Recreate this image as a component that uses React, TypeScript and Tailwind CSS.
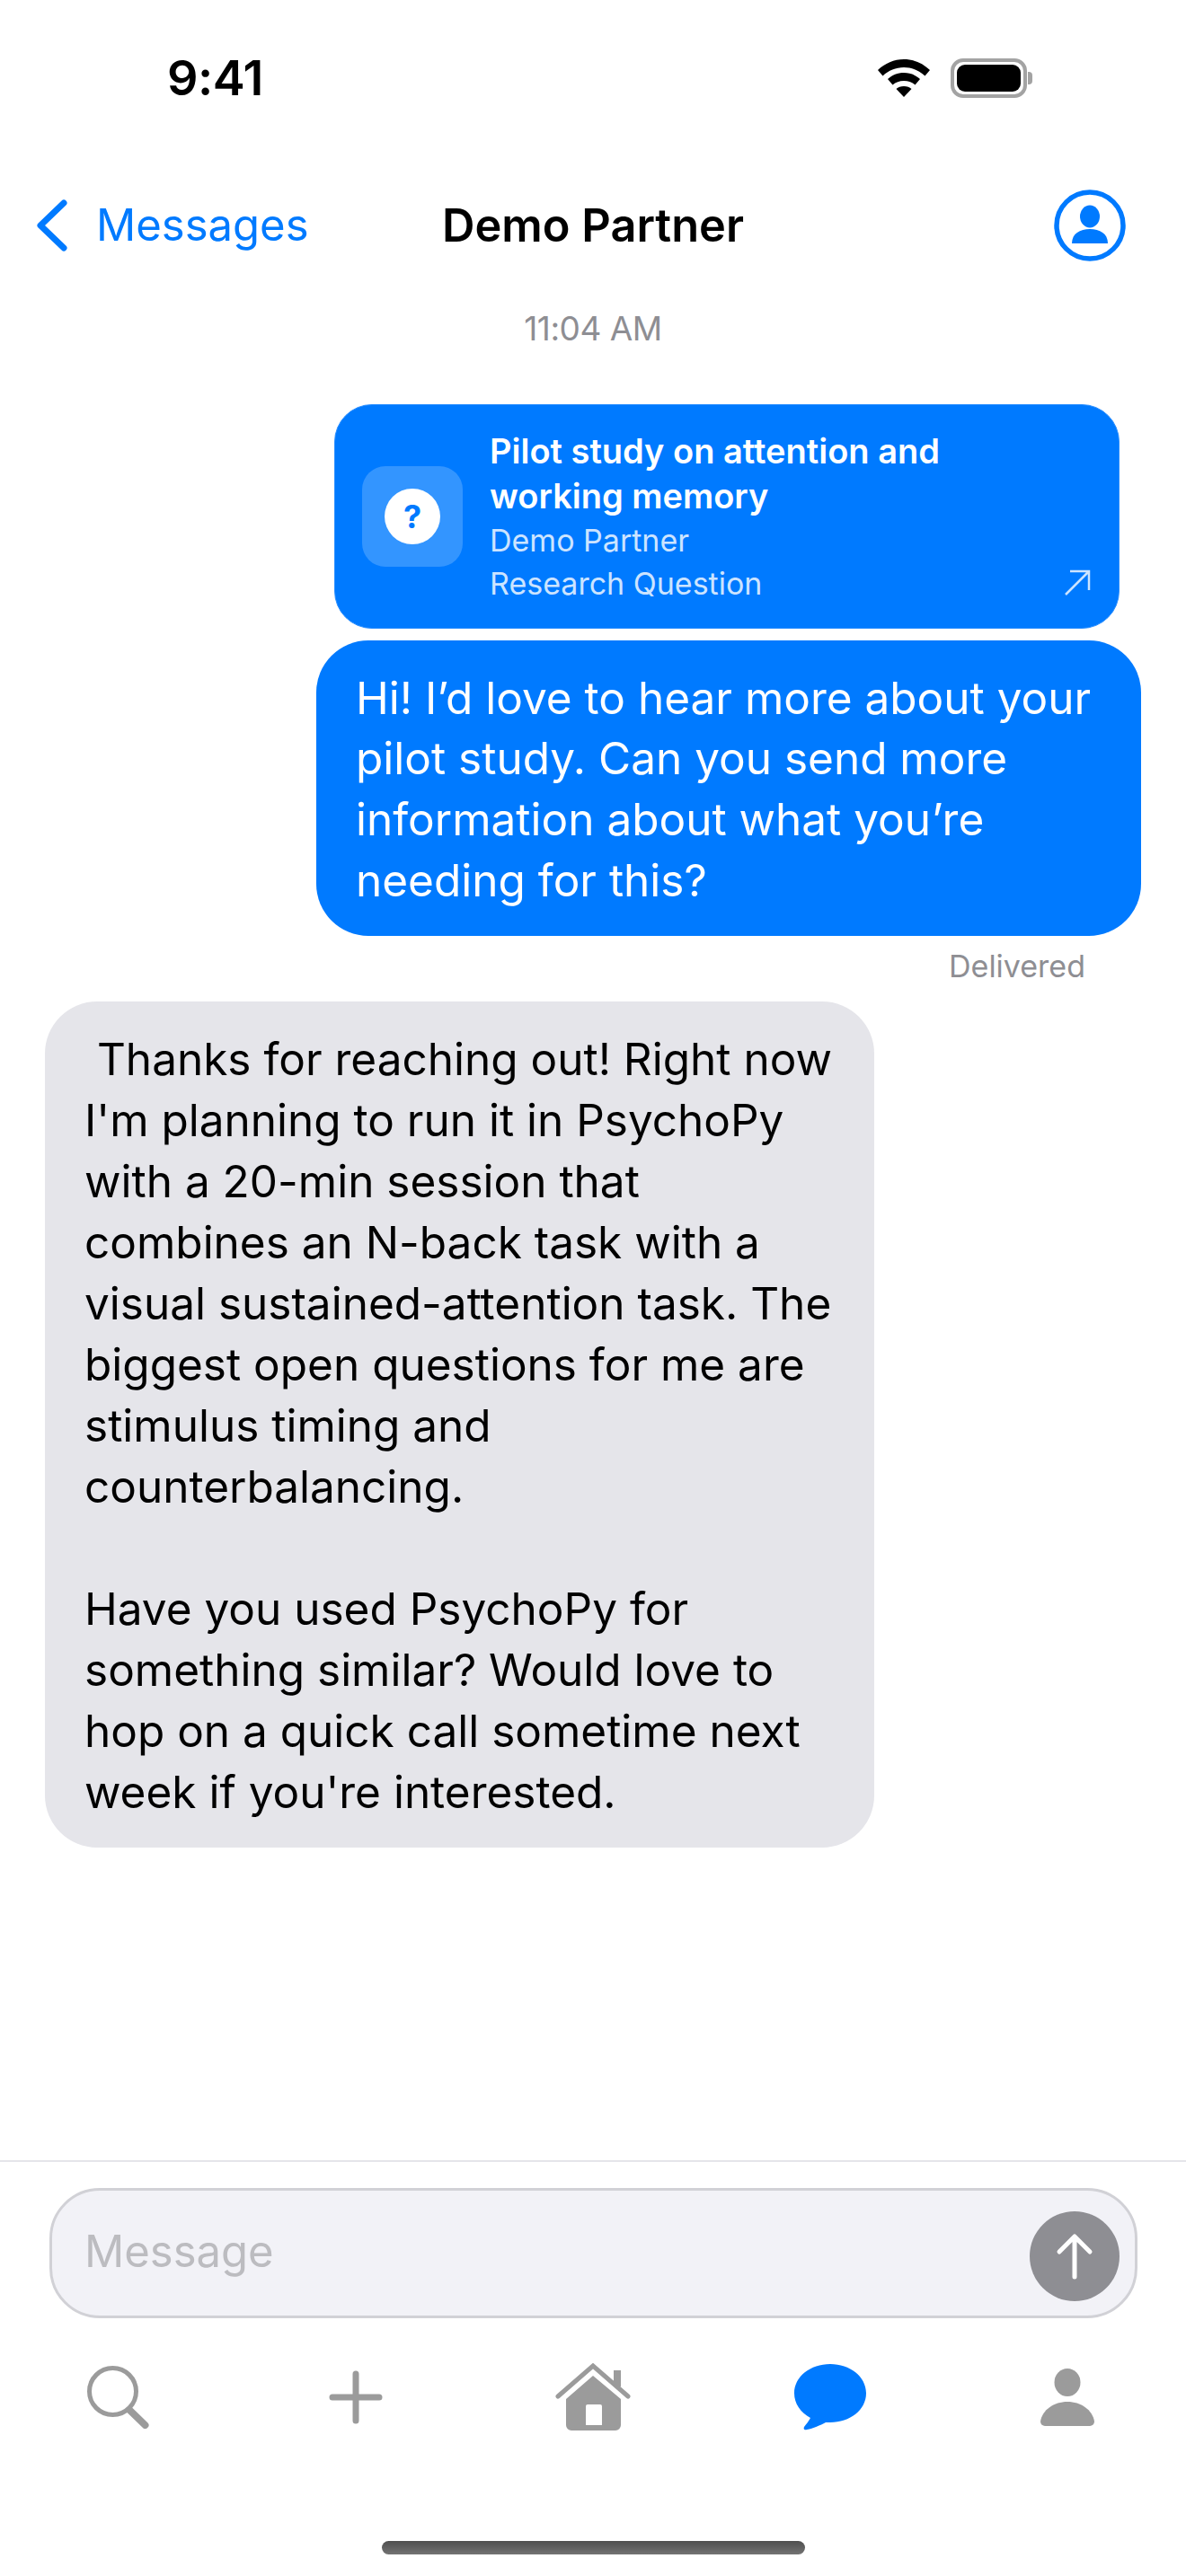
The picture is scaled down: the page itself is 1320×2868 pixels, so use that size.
const BLUE = "#007aff";

function StatusBar() {
  return (
    <div className="flex h-[174px] items-start justify-between pl-[186px] pr-[171px] pt-[54px]">
      <span className="text-[54px] leading-[66px] font-semibold tracking-[-0.5px] text-black">9:41</span>
      <div className="mt-[11px] flex items-center gap-[23px]">
        <svg width="58" height="42" viewBox="0 0 58 42">
          <path d="M29 0C18 0 8 4.500 0 12l5.500 6.500C12 12.500 20 9 29 9s17 3.500 23.500 9.500L58 12C50 4.500 40 0 29 0Z" fill="#000" />
          <path d="M29 15c-7 0-13 2.500-18 7l5.500 6.500C20 25.500 24 24 29 24s9 1.500 12.500 4.500L47 22c-5-4.500-11-7-18-7Z" fill="#000" />
          <path d="M29 30c-3.500 0-6.500 1-8.500 3L29 42l8.500-9c-2-2-5-3-8.500-3Z" fill="#000" />
        </svg>
        <div className="flex items-center gap-[1px]">
          <div className="flex h-[44px] w-[85px] items-center justify-center rounded-[14px] border-[4px] border-[#a3a3a3] bg-white">
            <div className="h-[30px] w-[71px] rounded-[9px] bg-black" />
          </div>
          <div className="h-[14px] w-[5px] rounded-r-[4px] bg-[#a3a3a3]" />
        </div>
      </div>
    </div>
  );
}

function NavBar() {
  return (
    <div className="relative flex h-[152px] items-center justify-between pl-[40px] pr-[67px] pt-[2px]">
      <div className="flex items-center gap-[31px]">
        <svg width="36" height="58" viewBox="0 0 36 58" fill="none">
          <path d="M31 4 5 29l26 25" stroke={BLUE} strokeWidth="7" strokeLinecap="round" strokeLinejoin="round" />
        </svg>
        <span className="text-[49px] leading-[66px] text-[#007aff]">Messages</span>
      </div>
      <span className="absolute left-[492px] top-[44px] text-[50.500px] leading-[66px] font-semibold text-black">Demo Partner</span>
      <svg width="80" height="80" viewBox="0 0 80 80">
        <circle cx="40" cy="40" r="37" fill="none" stroke={BLUE} strokeWidth="5.500" />
        <ellipse cx="40" cy="30" rx="11" ry="12.500" fill={BLUE} />
        <path d="M20 60c0-11 9-16 20-16s20 5 20 16Z" fill={BLUE} />
      </svg>
    </div>
  );
}

function LinkCard() {
  return (
    <div className="relative ml-[372px] flex h-[250px] w-[874px] items-center gap-[30px] rounded-[42px] border border-[#2b8fff] bg-[#007aff] pl-[30px]">
      <div className="flex h-[112px] w-[112px] shrink-0 items-center justify-center rounded-[26px] bg-[#3395ff]">
        <div className="flex h-[62px] w-[62px] items-center justify-center rounded-full bg-white">
          <span className="text-[36px] leading-none font-bold text-[#007aff]">?</span>
        </div>
      </div>
      <div className="flex flex-col">
        <span className="text-[38px] leading-[50px] font-semibold text-white">Pilot study on attention and</span>
        <span className="text-[38px] leading-[50px] font-semibold text-white">working memory</span>
        <span className="mt-[2px] text-[34px] leading-[46px] text-[#cce4ff]">Demo Partner</span>
        <span className="mt-[2px] text-[34px] leading-[46px] text-[#cce4ff]">Research Question</span>
      </div>
      <svg className="absolute right-[30px] bottom-[34px]" width="32" height="32" viewBox="0 0 32 32" fill="none">
        <path d="M3 29 29 3M8 3h21v21" stroke="#cce4ff" strokeWidth="2.500" />
      </svg>
    </div>
  );
}

function Messages() {
  return (
    <div className="flex-1">
      <p className="pt-[20px] text-center text-[37px] leading-[40px] tracking-[-0.5px] text-[#8e8e93]">11:04 AM</p>
      <div className="mt-[64px]">
        <LinkCard />
        <div className="mt-[13px] ml-[352px] flex h-[329px] w-[918px] items-center rounded-[58px] bg-[#007aff] pt-[3px] pl-[44px] pr-[20px]">
          <p className="text-[49.500px] leading-[67.600px] text-white">
            Hi! I’d love to hear more about your
            <br />
            pilot study. Can you send more
            <br />
            information about what you’re
            <br />
            needing for this?
          </p>
        </div>
        <p className="mt-[16px] mr-[112px] text-right text-[34px] leading-[36px] text-[#8e8e93]">Delivered</p>
        <div className="mt-[21px] ml-[50px] w-[923px] rounded-[58px] bg-[#e5e5ea] pt-[30px] pb-[28px] pl-[44px] pr-[20px]">
          <p className="text-[49.500px] leading-[68px] whitespace-pre text-black">
            {" Thanks for reaching out! Right now\nI'm planning to run it in PsychoPy\nwith a 20-min session that\ncombines an N-back task with a\nvisual sustained-attention task. The\nbiggest open questions for me are\nstimulus timing and\ncounterbalancing.\n\nHave you used PsychoPy for\nsomething similar? Would love to\nhop on a quick call sometime next\nweek if you're interested."}
          </p>
        </div>
      </div>
    </div>
  );
}

function Composer() {
  return (
    <div className="border-t-2 border-[#e5e5ea] pt-[29px]">
      <div className="ml-[55px] flex h-[145px] w-[1211px] items-center justify-between rounded-[56px] border-[3px] border-[#d1d1d6] bg-[#f2f2f7] pl-[36px] pr-[17px]">
        <span className="mb-[3px] text-[49px] text-[#bcbcc0]">Message</span>
        <div className="mt-[6px] flex h-[100px] w-[100px] items-center justify-center rounded-full bg-[#8e8e93]">
          <svg width="50" height="52" viewBox="0 0 50 52" fill="none">
            <path d="M25 49V4M8 21 25 4l17 17" stroke="#fff" strokeWidth="5" strokeLinecap="round" strokeLinejoin="round" />
          </svg>
        </div>
      </div>
    </div>
  );
}

function TabBar() {
  return (
    <div className="mt-[50px] grid h-[76px] grid-cols-5 items-center justify-items-center">
      <svg width="70" height="70" viewBox="0 0 70 70" fill="none">
        <circle cx="28.500" cy="28.500" r="26" stroke="#9b9b9b" strokeWidth="5" />
        <path d="M47 49 64.500 66" stroke="#9b9b9b" strokeWidth="8" strokeLinecap="round" />
      </svg>
      <svg width="60" height="60" viewBox="0 0 60 60" fill="none">
        <path d="M30 4v52M4 30h52" stroke="#9b9b9b" strokeWidth="7" strokeLinecap="round" />
      </svg>
      <svg width="84" height="76" viewBox="0 0 84 76">
        <path d="M3 37 42 3l39 34" fill="none" stroke="#9b9b9b" strokeWidth="5" strokeLinecap="round" />
        <path d="M69 8v18" fill="none" stroke="#9b9b9b" strokeWidth="8" />
        <path d="M42 14 73 40v29a6 6 0 0 1-6 6H18a6 6 0 0 1-6-6V40ZM36 46a2 2 0 0 0-2 2v21h18V48a2 2 0 0 0-2-2Z" fill="#9b9b9b" fillRule="evenodd" />
      </svg>
      <svg width="80" height="74" viewBox="0 0 80 74">
        <path d="M40 0C18 0 0 14 0 32.500 0 44 7 54 18 60 16 64 13 67 11 70c-1 2 0 4 3 3 7-1 15-5 21-8 2 0 3 0 5 0 22 0 40-14 40-32.500S62 0 40 0Z" fill="#007aff" />
      </svg>
      <svg width="60" height="64" viewBox="0 0 60 64">
        <ellipse cx="30" cy="15.500" rx="14.500" ry="15.500" fill="#9b9b9b" />
        <path d="M0 59C2 46 15 37 30 37s28 9 30 22a5 5 0 0 1-5 5H5a5 5 0 0 1-5-5Z" fill="#9b9b9b" />
      </svg>
    </div>
  );
}

export default function App() {
  return (
    <div className="flex h-[2868px] w-[1320px] flex-col overflow-hidden bg-white font-['Inter',sans-serif]">
      <StatusBar />
      <NavBar />
      <Messages />
      <Composer />
      <TabBar />
      <div className="mt-[122px] mb-[24px] ml-[425px] h-[15px] w-[471px] rounded-full bg-gradient-to-b from-[#4f4f4f] to-[#737373]" />
    </div>
  );
}
